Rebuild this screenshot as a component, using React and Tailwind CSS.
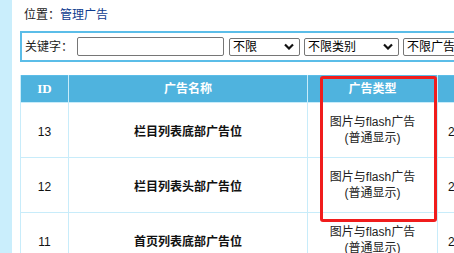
import React from "react";

const rows = [
  { id: 13, name: "栏目列表底部广告位", date: "2013-05-20" },
  { id: 12, name: "栏目列表头部广告位", date: "2013-05-20" },
  { id: 11, name: "首页列表底部广告位", date: "2013-05-20" },
];

function Chevron() {
  return (
    <svg width="10" height="7" viewBox="0 0 10 7" className="shrink-0">
      <path d="M1 1.5 L5 5.5 L9 1.5" fill="none" stroke="#111" strokeWidth="2.2" />
    </svg>
  );
}

function FakeSelect({ label, width }) {
  return (
    <div
      className={`${width} h-[18px] border border-[#767676] rounded-[2px] bg-white flex items-center justify-between pl-[3px] pr-[5px] text-[12px] leading-none text-black shrink-0`}
    >
      <span>{label}</span>
      <Chevron />
    </div>
  );
}

export default function App() {
  return (
    <div
      className="w-[454px] h-[253px] overflow-hidden flex bg-white"
      style={{ fontFamily: '"Liberation Sans", "Noto Sans CJK SC", sans-serif' }}
    >
      <div className="w-[12px] shrink-0 bg-[#caeefc]" />
      <div className="flex-1 min-w-0 pl-[8px] overflow-hidden">
        {/* breadcrumb */}
        <div className="h-[31px] flex items-center pl-[4px] pb-[1px] text-[12px]">
          <span className="text-[#222]">位置：</span>
          <span className="text-[#0d3b8e]">管理广告</span>
        </div>

        {/* search bar */}
        <div className="w-[600px] h-[31px] border-2 border-r-0 border-[#5bbde8] flex items-center pl-[3px] text-[12px] text-[#222]">
          <span className="w-[52px] shrink-0">关键字：</span>
          <div className="w-[147px] h-[19px] border border-[#767676] rounded-[2px] bg-white shrink-0" />
          <div className="ml-[5px] flex items-center gap-[4px]">
            <FakeSelect label="不限" width="w-[71px]" />
            <FakeSelect label="不限类别" width="w-[95px]" />
            <FakeSelect label="不限广告位" width="w-[95px]" />
          </div>
        </div>

        {/* table */}
        <div className="relative mt-[13px] w-[600px]">
          <table className="w-[600px] border-collapse table-fixed border border-[#5bbde8] text-[12px]">
            <colgroup>
              <col className="w-[48px]" />
              <col className="w-[239px]" />
              <col className="w-[130px]" />
              <col />
            </colgroup>
            <thead>
              <tr className="h-[27px] bg-[#4fb3de] text-white font-bold">
                <th
                  className="border border-[#c8ecfa] border-t-0 text-[13px]"
                  style={{ fontFamily: '"Liberation Serif", serif' }}
                >
                  ID
                </th>
                <th className="border border-[#c8ecfa] border-t-0">广告名称</th>
                <th className="border border-[#c8ecfa] border-t-0">广告类型</th>
                <th className="border border-[#c8ecfa] border-t-0 text-left pl-[40px]">添加时间</th>
              </tr>
            </thead>
            <tbody>
              {rows.map((r) => (
                <tr key={r.id} className="h-[55px] text-[#111]">
                  <td className="border border-[#c8ecfa] text-center pt-[3px]">{r.id}</td>
                  <td className="border border-[#c8ecfa] text-center font-bold pt-[3px]">{r.name}</td>
                  <td className="border border-[#c8ecfa] text-center leading-[16px] text-[#222]">
                    图片与flash广告
                    <br />
                    (普通显示)
                  </td>
                  <td className="border border-[#c8ecfa] pl-[10px] pt-[3px]">{r.date}</td>
                </tr>
              ))}
            </tbody>
          </table>
          <div className="absolute left-[300px] top-[1px] w-[117px] h-[146px] border-[3px] border-[#f01c1c] rounded-[3px] pointer-events-none" />
        </div>
      </div>
    </div>
  );
}
